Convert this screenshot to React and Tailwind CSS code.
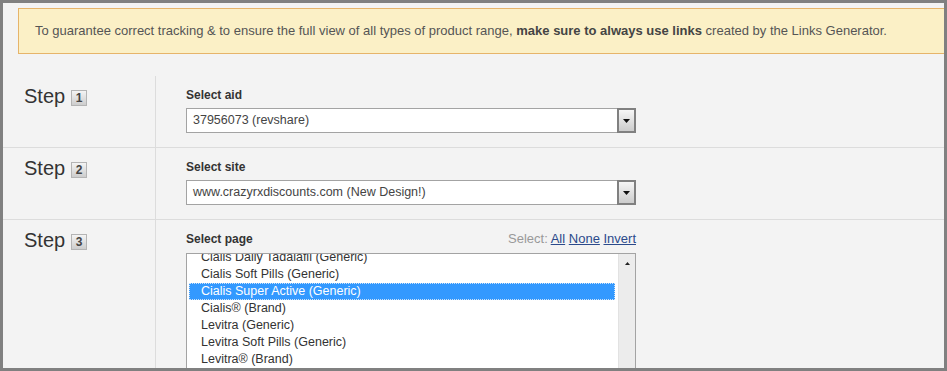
import React from 'react';

const pages = [
    'Cialis Daily Tadalafil (Generic)',
    'Cialis Soft Pills (Generic)',
    'Cialis Super Active (Generic)',
    'Cialis® (Brand)',
    'Levitra (Generic)',
    'Levitra Soft Pills (Generic)',
    'Levitra® (Brand)',
];

const StepLabel = ({ n }) => (
    <div className="w-[153px] shrink-0 border-r border-[#dcdcdc] pl-[21px] pt-[8px] flex items-start">
        <span className="text-[20px] leading-[24px] text-[#333]">Step</span>
        <span className="ml-[6px] mt-[6px] w-[16px] h-[16px] flex items-center justify-center border border-[#b4b4b4] bg-gradient-to-b from-[#f4f4f4] to-[#cdcdcd] text-[12px] leading-none font-bold text-[#444]">{n}</span>
    </div>
);

const Combo = ({ value }) => (
    <div className="mt-[6px] w-[450px] h-[25px] flex bg-white border border-[#a3a3a3]">
        <div className="flex-1 pl-[6px] flex items-center text-[12.5px] text-[#444]">{value}</div>
        <div className="w-[19px] h-[25px] -mt-[1px] -mr-[1px] border-2 border-[#808080] bg-gradient-to-b from-[#f6f6f6] to-[#cccccc] flex items-center justify-center">
            <svg width="7" height="4" viewBox="0 0 7 4"><polygon points="0,0 7,0 3.5,4" fill="#111" /></svg>
        </div>
    </div>
);

const App = () => {
    return (
        <div className="w-[947px] h-[371px] overflow-hidden border-[3px] border-[#808080] bg-[#f3f3f3] font-['Liberation_Sans',Arial,sans-serif]">
            <div className="mt-[5px] ml-[15px] h-[46px] flex items-center pl-[16px] bg-[#fbf0c6] border border-r-0 border-[#e6b46a] text-[13px] text-[#555]">
                <span>To guarantee correct tracking &amp; to ensure the full view of all types of product range, <b className="text-[#444]">make sure to always use links</b> created by the Links Generator.</span>
            </div>

            <div className="mt-[22px]">
                <div className="h-[72px] flex border-b border-[#dcdcdc]">
                    <StepLabel n="1" />
                    <div className="pl-[30px] pt-[12px]">
                        <div className="text-[12px] leading-[14px] font-bold text-[#333]">Select aid</div>
                        <Combo value="37956073 (revshare)" />
                    </div>
                </div>

                <div className="h-[72px] flex border-b border-[#dcdcdc]">
                    <StepLabel n="2" />
                    <div className="pl-[30px] pt-[12px]">
                        <div className="text-[12px] leading-[14px] font-bold text-[#333]">Select site</div>
                        <Combo value="www.crazyrxdiscounts.com (New Design!)" />
                    </div>
                </div>

                <div className="h-[160px] flex">
                    <StepLabel n="3" />
                    <div className="pl-[30px] pt-[12px]">
                        <div className="w-[450px] flex justify-between items-baseline leading-[14px]">
                            <span className="text-[12px] font-bold text-[#333]">Select page</span>
                            <span className="text-[13px] text-[#999]">
                                Select: <a href="#" className="text-[#2b4a8b] underline">All</a> <a href="#" className="text-[#2b4a8b] underline">None</a> <a href="#" className="text-[#2b4a8b] underline">Invert</a>
                            </span>
                        </div>
                        <div className="mt-[7px] w-[450px] h-[130px] flex bg-white border border-[#a3a3a3]">
                            <div className="flex-1 overflow-hidden pl-[2px] pr-[3px]">
                                <div className="-mt-[5px]">
                                    {pages.map(p => {
                                        const sel = p === 'Cialis Super Active (Generic)';
                                        return (
                                            <div key={p} className={`h-[17px] leading-[15px] pl-[11px] border border-dotted text-[12.5px] ${sel ? 'bg-[#3399ff] text-white border-[#cfe3f7]' : 'text-[#333] border-transparent'}`}>{p}</div>
                                        );
                                    })}
                                </div>
                            </div>
                            <div className="w-[17px] bg-[#ececec] border-l border-[#e2e2e2] flex justify-center pt-[8px]">
                                <svg width="5" height="3" viewBox="0 0 5 3"><polygon points="2.5,0 5,3 0,3" fill="#222" /></svg>
                            </div>
                        </div>
                    </div>
                </div>
            </div>
        </div>
    );
};

export default App;
